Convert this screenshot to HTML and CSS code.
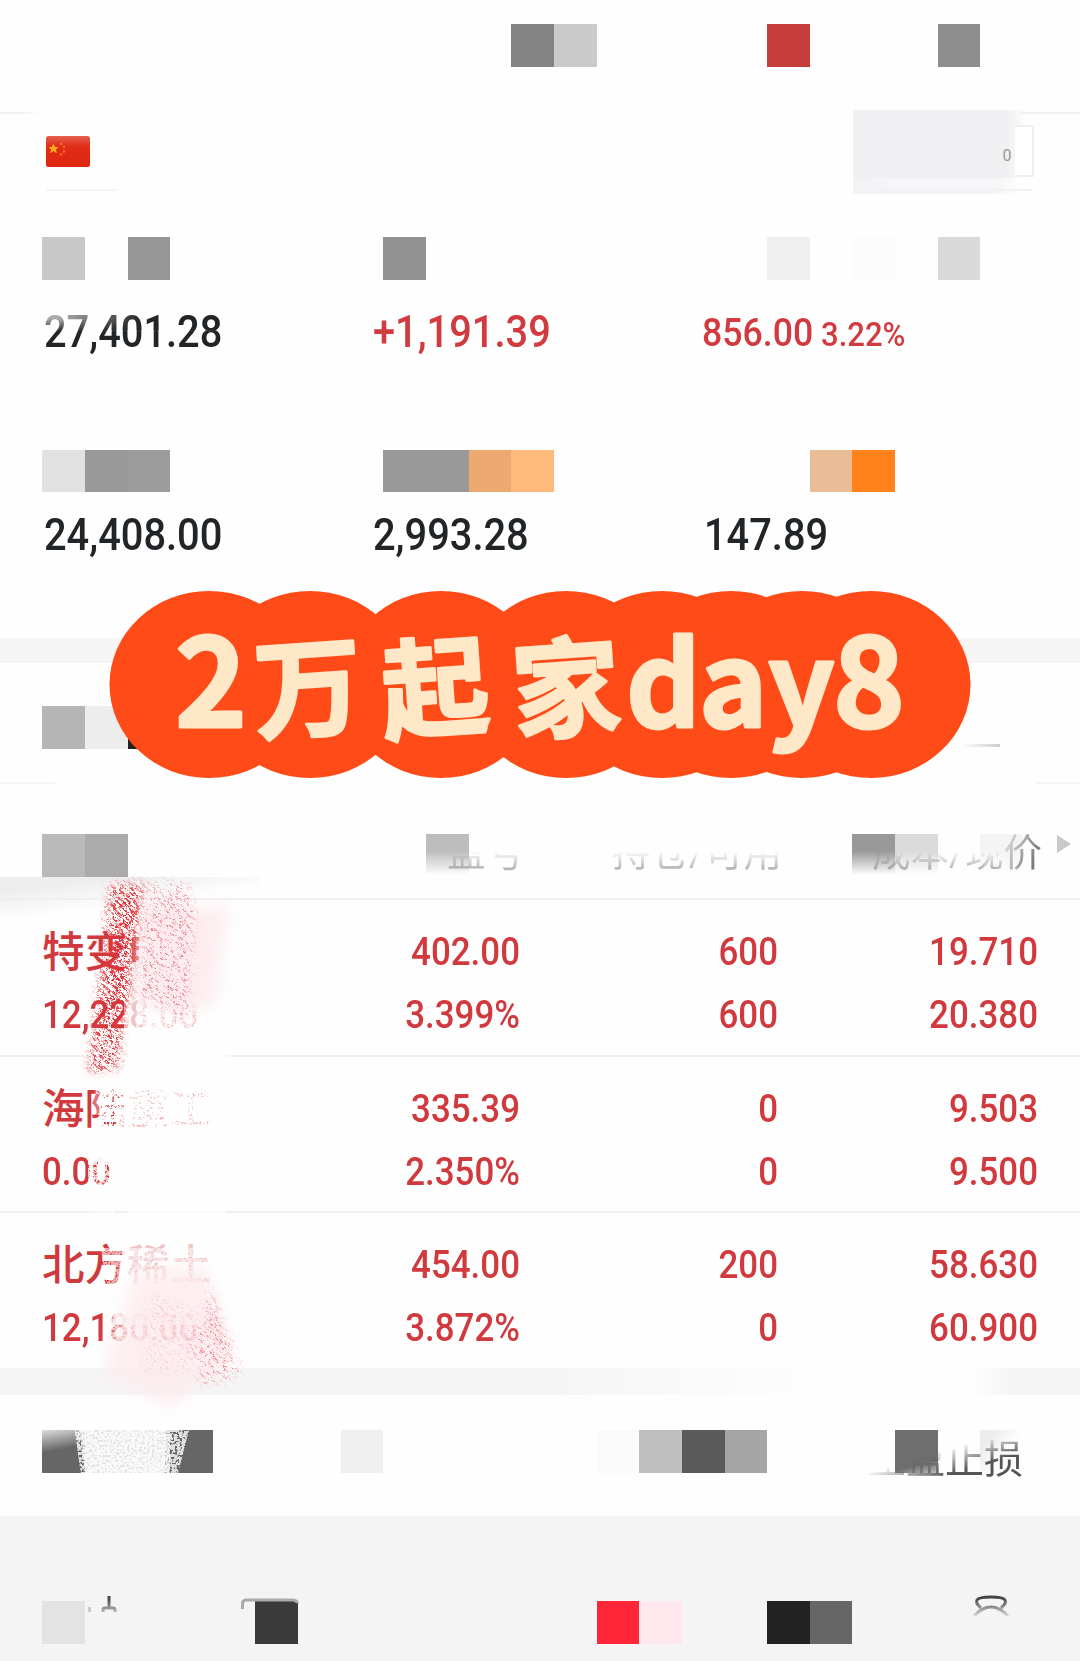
FILE: index.html
```html
<!DOCTYPE html>
<html lang="zh-CN">
<head>
    <meta charset="UTF-8">
    <meta name="viewport" content="width=device-width, initial-scale=1.0">
    <title>持仓</title>
    <link rel="stylesheet" href="styles.css">
</head>
<body>
    <div class="page">
        <header class="topbar">
            <div class="tiles">
                <i class="c12 g52"></i><i class="c13 g79"></i><i class="c18 red"></i><i class="c22 g56"></i>
            </div>
        </header>

        <section class="account">
            <svg class="flag" viewBox="0 0 44 31">
                <defs>
                    <linearGradient id="flagFill" x1="0" y1="0" x2="0" y2="1">
                        <stop offset="0" stop-color="#e4604e"/>
                        <stop offset=".35" stop-color="#df2c16"/>
                        <stop offset="1" stop-color="#df260f"/>
                    </linearGradient>
                </defs>
                <rect width="44" height="31" rx="2.5" fill="url(#flagFill)"/>
                <path d="M7.5 8.500l1.200 3h3l-2.400 1.900 1 3-2.800-1.900-2.800 1.900 1-3-2.400-1.900h3z" fill="#ffae1c" stroke="#ffae1c"/>
                <g fill="#f2702a"><circle cx="15" cy="8" r="1.200"/><circle cx="18" cy="11" r="1.200"/><circle cx="18" cy="15.500" r="1.200"/><circle cx="15" cy="18.500" r="1.200"/></g>
            </svg>
            <div class="patch"><div class="patch-box"></div><span>0</span></div>
        </section>

        <section class="summary">
            <div class="tiles">
                <i class="c1 g78"></i><i class="c3 g59"></i><i class="c9 g57"></i><i class="c18 g94"></i><i class="c20 g99"></i><i class="c22 g85"></i>
            </div>
            <div class="values">
                <div><span class="num wiped">27,401.28</span></div>
                <div class="up"><span class="num">+1,191.39</span></div>
                <div class="up"><span class="num mid">856.00</span><span class="num small">3.22%</span></div>
            </div>
            <div class="tiles second">
                <i class="c1 g88"></i><i class="c2 g60"></i><i class="c3 g61"></i><i class="c9 g60"></i><i class="c10 g60"></i><i class="c11 tan"></i><i class="c12 peach"></i><i class="c19 sand"></i><i class="c20 orange"></i>
            </div>
            <div class="values">
                <div><span class="num">24,408.00</span></div>
                <div><span class="num">2,993.28</span></div>
                <div><span class="num indent">147.89</span></div>
            </div>
        </section>

        <div class="band"></div>

        <section class="tabs">
            <div class="tiles">
                <i class="c1 g71"></i><i class="c2 g93"></i><i class="c3 g13"></i>
            </div>
            <div class="tab-mark"></div>
        </section>

        <section class="holdings">
            <div class="thead">
                <div class="tiles">
                    <i class="c1 g73"></i><i class="c2 g67"></i><i class="c10 g74 fade"></i><i class="c20 g60 fade"></i><i class="c21 g86 fade"></i><i class="c23 g95 fade"></i>
                </div>
                <div class="labels">
                    <span></span>
                    <span class="erased">盈亏</span>
                    <span class="erased">持仓/可用</span>
                    <span><b class="erased">成本/现</b><b class="last">价</b></span>
                </div>
                <div class="arrow"></div>
                <div class="smudge"></div>
            </div>
            <div class="row">
                <div class="name"><strong>特变电工</strong><span class="num">12,228.00</span></div>
                <div><span class="num">402.00</span><span class="num">3.399%</span></div>
                <div><span class="num">600</span><span class="num">600</span></div>
                <div><span class="num">19.710</span><span class="num">20.380</span></div>
            </div>
            <div class="row">
                <div class="name"><strong>海陆重工</strong><span class="num">0.00</span></div>
                <div><span class="num">335.39</span><span class="num">2.350%</span></div>
                <div><span class="num">0</span><span class="num">0</span></div>
                <div><span class="num">9.503</span><span class="num">9.500</span></div>
            </div>
            <div class="row">
                <div class="name"><strong>北方稀土</strong><span class="num">12,180.00</span></div>
                <div><span class="num">454.00</span><span class="num">3.872%</span></div>
                <div><span class="num">200</span><span class="num">0</span></div>
                <div><span class="num">58.630</span><span class="num">60.900</span></div>
            </div>
        </section>

        <div class="band lower"></div>

        <section class="orders">
            <div class="tiles">
                <i class="c1 g40 shine"></i><i class="c2 g72"></i><i class="c3 g72"></i><i class="c4 g40"></i><i class="c8 g94"></i><i class="c14 g98"></i><i class="c15 g75"></i><i class="c16 g35"></i><i class="c17 g65"></i><i class="c21 g43 base"></i><i class="c23 g93 half"></i>
            </div>
            <span class="stop">止盈止损</span>
        </section>

        <footer class="nav">
            <div class="tiles">
                <i class="c1 g89"></i><i class="c6 g23"></i><i class="c14 hot"></i><i class="c15 pink"></i><i class="c18 g13"></i><i class="c19 g40"></i>
            </div>
            <svg class="nav-icons" viewBox="0 0 1080 30" fill="none">
                <defs>
                    <linearGradient id="iconFade" gradientUnits="userSpaceOnUse" x1="0" y1="3" x2="0" y2="24">
                        <stop offset="0" stop-color="#444"/>
                        <stop offset=".5" stop-color="#999"/>
                        <stop offset="1" stop-color="#f4f4f4"/>
                    </linearGradient>
                </defs>
                <g stroke="url(#iconFade)" stroke-width="3">
                    <path d="M109 1v11M103 17v-2q0-2 2-2h8q2 0 2 2v2"/>
                    <path d="M89.500 12v5" stroke="#ccc"/>
                    <path d="M242.500 14v-5q0-4 4-4h46q4 0 5 3" stroke="#aaa"/>
                    <path d="M981 13q-6-5-4-8 2-3 14-3t14 3q2 3-4 8"/>
                    <path d="M974 21q17-18 34 0"/>
                </g>
            </svg>
        </footer>

        <!-- crayon marks over the names column -->
        <svg class="scribble" viewBox="0 0 300 660">
            <defs>
                <filter id="crayon" x="-20%" y="-10%" width="140%" height="120%">
                    <feTurbulence type="fractalNoise" baseFrequency=".3 .42" numOctaves="3" seed="7" result="n"/>
                    <feColorMatrix in="n" values="0 0 0 0 0  0 0 0 0 0  0 0 0 0 0  6 0 0 0 -2.800" result="grain"/>
                    <feGaussianBlur in="SourceGraphic" stdDeviation="4" result="s"/>
                    <feComposite in="s" in2="grain" operator="in" result="g"/>
                    <feDisplacementMap in="g" in2="n" scale="8"/>
                </filter>
                <filter id="light" x="-20%" y="-10%" width="140%" height="120%">
                    <feTurbulence type="fractalNoise" baseFrequency=".3 .42" numOctaves="3" seed="3" result="n"/>
                    <feColorMatrix in="n" values="0 0 0 0 0  0 0 0 0 0  0 0 0 0 0  6 0 0 0 -3.300" result="grain"/>
                    <feGaussianBlur in="SourceGraphic" stdDeviation="5" result="s"/>
                    <feComposite in="s" in2="grain" operator="in" result="g"/>
                    <feDisplacementMap in="g" in2="n" scale="8"/>
                </filter>
                <filter id="white" x="-10%" y="-5%" width="120%" height="110%">
                    <feTurbulence type="fractalNoise" baseFrequency=".4" numOctaves="3" seed="11" result="n"/>
                    <feColorMatrix in="n" values="0 0 0 0 0  0 0 0 0 0  0 0 0 0 0  10 0 0 0 -3.700" result="grain"/>
                    <feComposite in="SourceGraphic" in2="grain" operator="in"/>
                </filter>
                <filter id="soft" x="-20%" y="-20%" width="140%" height="140%"><feGaussianBlur stdDeviation="8"/></filter>
            </defs>
            <g fill="#fefefe">
                <path d="M140 54h90v170H124V110h14zM128 225h100v70H100zM134 295h92v160H112z" opacity=".7"/>
                <path d="M100 175h130v70H92z" opacity=".3"/>
                <path d="M92 268h138v24H88z" opacity=".8"/>
                <path d="M140 54h90v170H96v-60h40z" opacity=".8" filter="url(#white)"/>
                <path d="M100 205h130v80H100z" filter="url(#white)"/>
                <path d="M88 285h26v60H88zM108 205h70v40h-80z" opacity=".8" filter="url(#white)"/>
                <path d="M100 378h130v60H112z" opacity=".6" filter="url(#white)"/>
                <path d="M110 436h110v38H104z" opacity=".65" filter="url(#white)"/>
            </g>
            <g filter="url(#soft)">
                <path d="M138 30l44-5 12 14 34-4-12 98-28 10-50-10z" fill="#fdedf0"/>
                <path d="M135 405l70-10 27 100-28 14-34 28-68-34z" fill="#fdebed" opacity=".8"/>
            </g>
            <path d="M110 16l34-4-14 88-8 60-4 40-30 2 8-62z" fill="#e3353b" filter="url(#crayon)"/>
            <path d="M124 24l12 8-6 100-18 10-6-15z" fill="#de2d35" opacity=".75" filter="url(#crayon)"/>
            <path d="M144 14l42-2 9 30-8 110-47-26z" fill="#e0727c" opacity=".8" filter="url(#light)"/>
            <path d="M208 412l32 88-14 10-24 5-12-54 16-4z" fill="#ee8790" filter="url(#light)"/>
            <path d="M210 424l22 62-8 4-16-42z" fill="#f5a5ad" opacity=".6" filter="url(#crayon)"/>
            <path d="M150 425l52 14-8 60-54 4z" fill="#f09aa3" opacity=".35" filter="url(#light)"/>
            <g fill="#fff">
                <path d="M80 560h86l-2 50H86z" opacity=".6"/>
                <path d="M74 556h116l-14 55H82z" filter="url(#white)" opacity=".8"/>
            </g>
        </svg>

        <svg class="banner" viewBox="0 0 1080 200">
            <g fill="#ff4b18">
                <ellipse cx="209" cy="99.500" rx="99.500" ry="93.500"/>
                <ellipse cx="310" cy="99.500" rx="99.500" ry="93.500"/>
                <ellipse cx="441" cy="99.500" rx="99.500" ry="93.500"/>
                <ellipse cx="566" cy="99.500" rx="99.500" ry="93.500"/>
                <ellipse cx="662" cy="99.500" rx="99.500" ry="93.500"/>
                <ellipse cx="731" cy="99.500" rx="99.500" ry="93.500"/>
                <ellipse cx="802" cy="99.500" rx="99.500" ry="93.500"/>
                <ellipse cx="871" cy="99.500" rx="99.500" ry="93.500"/>
            </g>
            <text class="digit" x="175" y="142">2</text>
            <text class="hanzi" x="257 384 515" y="147" rotate="-4">万起家</text>
            <text class="latin" x="626 699 768" y="142">day</text>
            <text class="digit" x="833" y="142">8</text>
        </svg>
    </div>
</body>
</html>
```
FILE: styles.css
```css
* {
    box-sizing: border-box;
}
body {
    margin: 0;
    background: #fefefe;
    font-family: Roboto, "Noto Sans CJK SC", sans-serif;
    color: #222527;
}
.page {
    position: relative;
    width: 1080px;
    height: 1661px;
    overflow: hidden;
}

/* mosaic blocks */
.tiles {
    display: grid;
    grid-template-columns: repeat(25, 42.650px);
    grid-template-rows: 42.6px;
    margin-left: -.4px;
}
.tiles i {
    grid-row: 1;
}
.c1 { grid-column: 2; }
.c2 { grid-column: 3; }
.c3 { grid-column: 4; }
.c4 { grid-column: 5; }
.c6 { grid-column: 7; }
.c8 { grid-column: 9; }
.c9 { grid-column: 10; }
.c10 { grid-column: 11; }
.c11 { grid-column: 12; }
.c12 { grid-column: 13; }
.c13 { grid-column: 14; }
.c14 { grid-column: 15; }
.c15 { grid-column: 16; }
.c16 { grid-column: 17; }
.c17 { grid-column: 18; }
.c18 { grid-column: 19; }
.c19 { grid-column: 20; }
.c20 { grid-column: 21; }
.c21 { grid-column: 22; }
.c22 { grid-column: 23; }
.c23 { grid-column: 24; }
.g13 { background: #222; }
.g23 { background: #3a3a3a; }
.g35 { background: #5a5a5a; }
.g40 { background: #666; }
.g43 { background: #6e6e6e; }
.g52 { background: #838383; }
.g56 { background: #8e8e8e; }
.g57 { background: #919191; }
.g59 { background: #969696; }
.g60 { background: #999; }
.g61 { background: #9c9c9c; }
.g65 { background: #a5a5a5; }
.g67 { background: #ababab; }
.g71 { background: #b5b5b5; }
.g72 { background: #b8b8b8; }
.g73 { background: #bababa; }
.g74 { background: #bdbdbd; }
.g75 { background: #bfbfbf; }
.g78 { background: #c8c8c8; }
.g79 { background: #cacaca; }
.g85 { background: #d9d9d9; }
.g86 { background: #dbdbdb; }
.g88 { background: #e1e1e1; }
.g89 { background: #e3e3e3; }
.g93 { background: #ededed; }
.g94 { background: #efefef; }
.g95 { background: #f4f4f4; }
.g98 { background: #fafafa; }
.g99 { background: #fcfcfc; }
.red { background: #c73d3a; }
.tan { background: #eea970; }
.peach { background: #ffb97a; }
.sand { background: #ebbd97; }
.orange { background: #ff821a; }
.hot { background: #ff2638; }
.pink { background: #ffe8ed; }
.fade {
    -webkit-mask-image: linear-gradient(#000 40%, transparent 95%);
    mask-image: linear-gradient(#000 40%, transparent 95%);
}
.g40.shine {
    background: linear-gradient(170deg, #ddd, #666 45%);
}
.g43.base {
    background: linear-gradient(165deg, #6e6e6e 75%, #bbb);
}
.g93.half {
    background: linear-gradient(125deg, #ededed 20%, #fefefe 60%);
}

.topbar {
    height: 112px;
    padding-top: 24px;
}
.account {
    position: relative;
    height: 79px;
    padding: 24px 46px;
    background:
        linear-gradient(90deg, #f2f2f2 70%, transparent) 0 0 / 38px 2px no-repeat,
        linear-gradient(#f2f2f2, #f2f2f2) 100% 0 / 60px 2px no-repeat,
        linear-gradient(#f4f4f4, #f4f4f4) 46px 100% / 71px 2px no-repeat,
        linear-gradient(#f2f2f2, #f2f2f2) 973px 100% / 60px 2px no-repeat;
}
.flag {
    display: block;
    width: 44px;
    height: 31px;
}
.patch {
    position: absolute;
    left: 852.500px;
    top: -2.500px;
    width: 181px;
    height: 84.500px;
    background:
        linear-gradient(90deg, transparent, #f7f7f9 20%) 16px 69px / 130px 9px no-repeat,
        linear-gradient(90deg, #f0eff2 84%, transparent 96%) 0 0 / 100% 68px no-repeat,
        linear-gradient(90deg, #f3f3f5 75%, transparent 92%);
    color: #999;
    font-size: 16px;
}
.patch-box {
    position: absolute;
    top: 15px;
    right: 0;
    width: 19px;
    height: 52px;
    background: #fff;
    border: 2px solid #efeff0;
    border-left: 0;
}
.patch span {
    position: absolute;
    left: 150px;
    top: 36px;
}

/* account totals */
.summary {
    height: 447px;
    padding-top: 46px;
}
.values {
    display: grid;
    grid-template-columns: 329px 329px 1fr;
    height: 54px;
    margin-top: 26px;
    padding-left: 44px;
    line-height: 54px;
}
.num {
    display: inline-block;
    font-size: 43.500px;
    font-weight: 500;
    transform: scaleX(.915);
    transform-origin: left;
    white-space: nowrap;
}
.values .mid {
    width: 119px;
    font-size: 39px;
}
.values .small {
    font-size: 33px;
    transform: scaleX(.94);
}
.values .indent {
    margin-left: 2px;
}
.wiped {
    background: linear-gradient(96deg, transparent 10%, #222527 55%) 0 0 / 100% 24px no-repeat, linear-gradient(#aaa 13px, #222527 26px);
    -webkit-background-clip: text;
    background-clip: text;
    color: transparent;
}
.up {
    color: #d13b3f;
}
.summary .second {
    margin-top: 90px;
}
.summary .second + .values {
    margin-top: 17px;
}

.band {
    height: 25px;
    background: #f5f5f5;
}
.tabs {
    height: 121px;
    padding-top: 43px;
    background:
        linear-gradient(#f4f4f4, #f4f4f4) 0 100% / 55px 2px no-repeat,
        linear-gradient(#f4f4f4, #f4f4f4) 100% 100% / 45px 2px no-repeat;
}
.tab-mark {
    width: 38px;
    height: 3px;
    margin: -5px 0 0 962px;
    background: linear-gradient(90deg, transparent, #ccc);
}

/* positions table */
.thead {
    position: relative;
    height: 114px;
    padding-top: 50px;
}
.labels,
.row {
    display: grid;
    grid-template-columns: 227px 1fr 258px 260px;
    padding: 0 42px;
}
.labels {
    position: relative;
    margin-top: -43px;
    padding-right: 38px;
    font-size: 38.500px;
    line-height: 38px;
    text-align: right;
    color: #888;
    z-index: 1;
}
.labels b {
    display: inline-block;
    font-weight: 400;
}
.erased {
    -webkit-mask-image: linear-gradient(transparent 46%, rgba(0, 0, 0, .6) 90%);
    mask-image: linear-gradient(transparent 46%, rgba(0, 0, 0, .6) 90%);
}
.last {
    background: linear-gradient(110deg, #ddd 10%, #777 80%);
    -webkit-background-clip: text;
    background-clip: text;
    color: transparent;
}
.arrow {
    position: absolute;
    left: 1057px;
    top: 51px;
    border: 9.500px solid transparent;
    border-left: 14px solid #c9c9c9;
    border-right: 0;
}
.smudge {
    position: absolute;
    left: 0;
    top: 93px;
    width: 260px;
    height: 40px;
    background: linear-gradient(172deg, #eee 20%, rgba(254, 254, 254, 0) 60%);
}
.row {
    height: 156.500px;
    padding-top: 21px;
    border-top: 2px solid #f0f0f0;
    color: #d0393d;
    text-align: right;
}
.row strong,
.row .num {
    display: block;
    height: 63px;
    font-size: 39px;
    line-height: 63px;
    transform-origin: right;
    transform: scaleX(.895);
}
.row .name {
    text-align: left;
    white-space: nowrap;
}
.row .name strong {
    font-size: 42.500px;
    font-weight: 500;
    transform: none;
}
.row .name .num {
    transform-origin: left;
}

.band.lower {
    height: 27.500px;
    background: linear-gradient(90deg, #f5f5f5 50%, #fefefe 76%, #fefefe 90%, #f5f5f5 94%);
}
.orders {
    position: relative;
    height: 121px;
    padding-top: 35px;
}
.stop {
    position: absolute;
    right: 57px;
    top: 44px;
    font-size: 39px;
    line-height: 42px;
    color: #555;
    -webkit-mask-image: linear-gradient(163deg, transparent 38%, #000 68%);
    mask-image: linear-gradient(163deg, transparent 38%, #000 68%);
}
.nav {
    position: relative;
    height: 145px;
    padding-top: 85px;
    background: #f4f4f4;
}
.nav-icons {
    position: absolute;
    left: 0;
    top: 79px;
    width: 1080px;
    height: 30px;
    overflow: visible;
}

.scribble {
    position: absolute;
    left: 0;
    top: 870px;
    width: 300px;
    height: 660px;
}
.banner {
    position: absolute;
    left: 0;
    top: 585px;
    width: 1080px;
    height: 200px;
    overflow: visible;
}
.banner text {
    fill: #ffe8c7;
    stroke: #ffe8c7;
    stroke-width: 3;
    stroke-linejoin: round;
    font-family: "Noto Sans CJK SC", sans-serif;
    font-weight: 700;
}
.digit {
    font-size: 122px;
}
.latin {
    font-size: 116px;
}
.hanzi {
    font-size: 108px;
}
```
